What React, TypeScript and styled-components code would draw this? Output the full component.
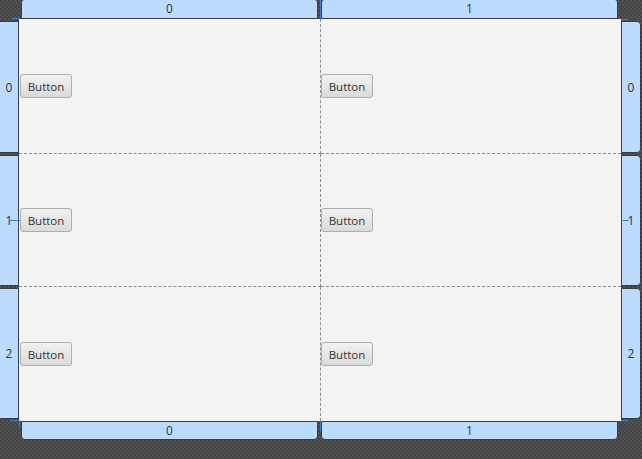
import React from 'react'
import styled, { createGlobalStyle } from 'styled-components'

const GlobalStyle = createGlobalStyle`
    html, body {
        margin:0;
        padding:0;
        background:#4a4a4a;
        font-family:"Open Sans","Noto Sans",sans-serif;
    }
`

const Frame = styled.div`
    position:relative;
    width:642px;
    height:459px;
    display:grid;
    grid-template-columns:19px 602px 21px;
    grid-template-rows:19px 402px 19px 1fr;
    background:repeating-conic-gradient(#525252 0 25%, #444444 0 50%) 0 0 / 4px 4px;
    overflow:hidden;
`
const ColumnRuler = styled.div<{ $bottom?: boolean }>`
    grid-column:2;
    grid-row:${p => (p.$bottom ? 3 : 1)};
    display:grid;
    grid-template-columns:1fr 1fr;
    column-gap:3px;
    padding:0 3px 0 2px;
`
const ColumnTab = styled.div<{ $bottom?: boolean }>`
    background:#bcdcff;
    border:1px solid #3c3c3c;
    border-top:${p => (p.$bottom ? '1px solid #3c3c3c' : 'none')};
    border-radius:${p => (p.$bottom ? '0 0 4px 4px' : '3px 3px 0 0')};
    color:#333;
    font-size:12px;
    line-height:17px;
    text-align:center;
    box-sizing:border-box;
    height:19px;
`
const RowRuler = styled.div<{ $right?: boolean }>`
    grid-column:${p => (p.$right ? 3 : 1)};
    grid-row:2;
    display:grid;
    grid-template-rows:132px 131px 131px;
    row-gap:2px;
    padding:2px ${p => (p.$right ? '1px' : '0')} 2px 0;
`
const RowTab = styled.div<{ $right?: boolean }>`
    background:#bcdcff;
    border:1px solid #3c3c3c;
    border-left:${p => (p.$right ? '1px solid #3c3c3c' : 'none')};
    border-radius:${p => (p.$right ? '0 4px 4px 0' : '0')};
    color:#333;
    font-size:12px;
    display:flex;
    align-items:center;
    justify-content:center;
    box-sizing:border-box;
`
const Sheet = styled.div`
    grid-column:2;
    grid-row:2;
    background:#f3f3f3;
    display:grid;
    grid-template-columns:302px 1fr;
    grid-template-rows:135px 133px 1fr;
`
const Cell = styled.div<{ $col: number; $row: number }>`
    display:flex;
    align-items:center;
    padding-left:${p => (p.$col === 0 ? '1px' : '0')};
    border-right:${p => (p.$col === 0 ? '1px dashed #8c8c8c' : 'none')};
    border-bottom:${p => (p.$row < 2 ? '1px dashed #8c8c8c' : 'none')};
    box-sizing:border-box;
`
const Button = styled.button`
    width:52px;
    height:24px;
    padding:0;
    border:1px solid #aeaeae;
    border-radius:3px;
    background:linear-gradient(#f2f2f2, #dadada);
    color:#333;
    font-family:"Open Sans","Noto Sans",sans-serif;
    font-size:11.5px;
    cursor:pointer;
    &:focus{
        outline:none;
    }
`
const Tick = styled.div<{ $v?: boolean }>`
    position:absolute;
    background:#3f7fd6;
    width:${p => (p.$v ? '1px' : 'auto')};
    height:${p => (p.$v ? 'auto' : '1px')};
`

const rows = [0, 1, 2]
const cols = [0, 1]

const App = () => {
    return (
        <>
            <GlobalStyle />
            <Frame>
                <ColumnRuler>
                    {cols.map(c => <ColumnTab key={c}>{c}</ColumnTab>)}
                </ColumnRuler>
                <RowRuler>
                    {rows.map(r => <RowTab key={r}>{r}</RowTab>)}
                </RowRuler>
                <Sheet>
                    {rows.map(r =>
                        cols.map(c => (
                            <Cell key={`${r}-${c}`} $col={c} $row={r}>
                                <Button>Button</Button>
                            </Cell>
                        ))
                    )}
                </Sheet>
                <RowRuler $right>
                    {rows.map(r => <RowTab key={r} $right>{r}</RowTab>)}
                </RowRuler>
                <ColumnRuler $bottom>
                    {cols.map(c => <ColumnTab key={c} $bottom>{c}</ColumnTab>)}
                </ColumnRuler>

                <Tick $v style={{ left: 320, top: 0, height: 20 }} />
                <Tick $v style={{ left: 320, top: 421, height: 10 }} />
                <Tick style={{ left: 12, top: 18, width: 7 }} />
                <Tick style={{ left: 10, top: 420, width: 9 }} />
                <Tick $v style={{ left: 19, top: 420, height: 7 }} />
                <Tick style={{ left: 621, top: 19, width: 7 }} />
                <Tick style={{ left: 621, top: 420, width: 7 }} />
                <Tick style={{ left: 10, top: 220, width: 10 }} />
                <Tick style={{ left: 621, top: 220, width: 8 }} />
            </Frame>
        </>
    )
}

export default App
